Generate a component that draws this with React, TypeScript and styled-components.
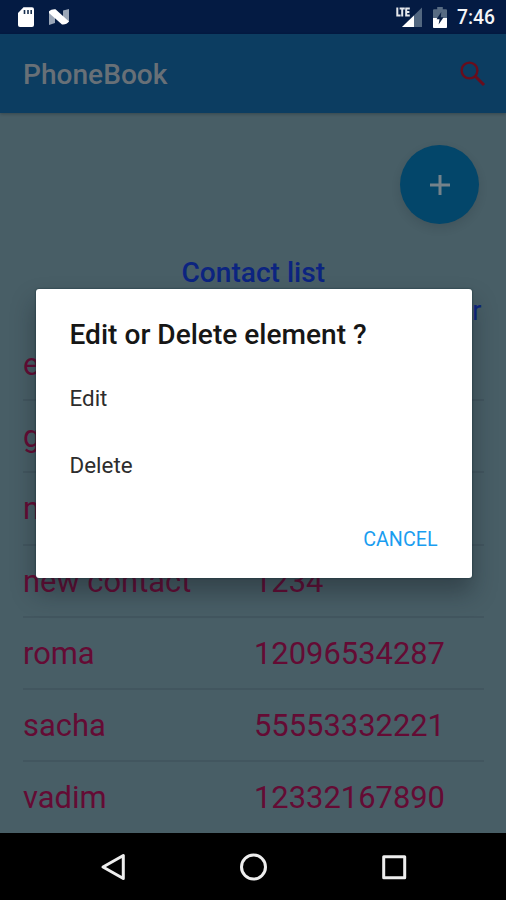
import React from "react";
import styled, { createGlobalStyle } from "styled-components";

const GlobalStyle = createGlobalStyle`
  * { box-sizing: border-box; }
  body { margin: 0; overflow: hidden; background: #485e66; font-family: Roboto, sans-serif; }
`;
const Screen = styled.div`
  position: relative;
  width: 506px;
  height: 900px;
  display: flex;
  flex-direction: column;
  background: #485e66;
  overflow: hidden;
`;
const StatusBar = styled.header`
  height: 34px;
  flex: none;
  display: flex;
  align-items: center;
  justify-content: space-between;
  padding: 0 11px 0 16px;
  background: #041b43;
`;
const StatusGroup = styled.div<{ $gap: number }>`
  display: flex;
  align-items: center;
  gap: ${(p) => p.$gap}px;
`;
const Clock = styled.time`
  color: #f4f6f8;
  font-size: 19.3px;
  font-weight: 500;
  line-height: 34px;
  padding-top: 2px;
`;
const AppBar = styled.div`
  height: 79px;
  flex: none;
  display: flex;
  align-items: center;
  justify-content: space-between;
  padding: 0 20px 0 23px;
  background: #0c3d61;
  box-shadow: 0 1px 3px rgba(0, 0, 0, 0.25);
`;
const AppTitle = styled.h1`
  margin: 2px 0 0;
  color: #687077;
  font-size: 28.1px;
  font-weight: 500;
`;
const IconButton = styled.button`
  display: flex;
  padding: 0;
  border: 0;
  background: none;
`;
const Content = styled.main`
  flex: 1;
  display: flex;
  flex-direction: column;
  min-height: 0;
  padding: 32px 22.5px 0 23px;
  overflow: hidden;
`;
const AddButton = styled.button`
  align-self: flex-end;
  display: flex;
  align-items: center;
  justify-content: center;
  width: 79px;
  height: 79px;
  flex: none;
  margin-right: 4.5px;
  padding: 0;
  border: 0;
  border-radius: 50%;
  background: #03466a;
  box-shadow: 0 4px 10px rgba(20, 25, 32, 0.14);
`;
const ListTitle = styled.h2`
  margin: 32px 0 0;
  height: 34px;
  line-height: 34px;
  text-align: center;
  color: #0c2480;
  font-size: 28.1px;
  font-weight: 500;
`;
const Columns = styled.div`
  display: flex;
  justify-content: flex-end;
  height: 39px;
  line-height: 42px;
  padding-right: 2px;
  color: #0c2480;
  font-size: 27px;
`;
const ContactRow = styled.div`
  display: grid;
  grid-template-columns: 231px 1fr;
  align-items: center;
  flex: none;
  height: 72.2px;
  padding-top: 2px;
  border-bottom: 2px solid #42565f;
  color: #640b34;
  font-size: 30.9px;
  line-height: 36px;
  white-space: nowrap;
  &:last-child { border-bottom-color: transparent; }
`;
const NavBar = styled.nav`
  height: 67px;
  flex: none;
  display: flex;
  align-items: center;
  justify-content: center;
  gap: 112px;
  background: #000;
`;
const Dialog = styled.section`
  position: absolute;
  left: 35.5px;
  top: 289px;
  width: 436px;
  height: 289px;
  display: flex;
  flex-direction: column;
  padding: 28px 34px 16px;
  border-radius: 3px;
  background: #fff;
  box-shadow: 0 0 2px rgba(5, 38, 42, 0.8), 0 14px 24px rgba(16, 22, 30, 0.38);
`;
const DialogTitle = styled.h2`
  margin: 0;
  color: #161616;
  font-size: 28.1px;
  line-height: 36px;
  font-weight: 500;
  white-space: nowrap;
`;
const Options = styled.div`
  display: flex;
  flex-direction: column;
  margin-top: 11px;
`;
const Option = styled.button`
  height: 67px;
  padding: 0;
  border: 0;
  background: none;
  color: #2d2d2d;
  font: 400 22.4px Roboto, sans-serif;
  text-align: left;
`;
const CancelButton = styled.button`
  align-self: flex-end;
  margin-top: 28.5px;
  padding: 0;
  border: 0;
  background: none;
  color: #1a9df0;
  font: 400 19.7px/26px Roboto, sans-serif;
`;

const contacts = [
  ["e", ""],
  ["g", ""],
  ["n", ""],
  ["new contact", "1234"],
  ["roma", "12096534287"],
  ["sacha", "55553332221"],
  ["vadim", "12332167890"],
];

const SdCardIcon = () => (
  <svg width="20" height="22" viewBox="0 0 20 22">
    <path d="M7.5 1.3H16q2 0 2 2V19q0 2-2 2H4q-2 0-2-2V7z" fill="#fff" />
    <path d="M8.5 4v4M12 4v4M15.2 4v4" stroke="#18304f" strokeWidth="1.6" />
  </svg>
);
const NougatIcon = () => (
  <svg width="22" height="18" viewBox="0 0 22 18">
    <path d="M1 4l6 3v8l-6 2zM15 2.5l6-1.5V14l-6-3z" fill="#9aa6b7" />
    <path d="M1 3.2Q3.5 .8 7.5 1.2L21 13.5Q18.5 17 14 16.5L1 5z" fill="#fff" />
  </svg>
);
const SignalIcon = () => (
  <svg width="28" height="22" viewBox="0 0 28 22">
    <path d="M27 1.5V21H7z" fill="#526780" />
    <path d="M19 9.5V21H7z" fill="#fff" />
    <path d="M2.3 1.6v8H5.6M4.6 2.5h5.2M7.2 2.5v8M14.8 2.5h-3.6v7.1h3.6M11.2 6h3.2" fill="none" stroke="#e5e8ed" strokeWidth="2" />
  </svg>
);
const BatteryIcon = () => (
  <svg width="14" height="21" viewBox="0 0 14 21">
    <path d="M4.2 0h5.6v2.3H13q1 0 1 1V20q0 1-1 1H1q-1 0-1-1V3.3q0-1 1-1h3.2z" fill="#586c83" />
    <path d="M0 11h14v9q0 1-1 1H1q-1 0-1-1z" fill="#fff" />
    <path d="M8.3 5L3.5 12.3h3L5.6 17.5l5-7.3H7.8z" fill="#0a2045" />
  </svg>
);

export default function App() {
  return (
    <>
      <GlobalStyle />
      <Screen>
        <StatusBar>
          <StatusGroup $gap={12}><SdCardIcon /><NougatIcon /></StatusGroup>
          <StatusGroup $gap={10}><SignalIcon /><BatteryIcon /><Clock>7:46</Clock></StatusGroup>
        </StatusBar>
        <AppBar>
          <AppTitle>PhoneBook</AppTitle>
          <IconButton aria-label="Search">
            <svg width="26" height="26" viewBox="0 0 26 26" fill="none" stroke="#690d1c" strokeWidth="2.4">
              <circle cx="9.5" cy="9.5" r="7.9" /><path d="M15 15l9 9" strokeWidth="3" />
            </svg>
          </IconButton>
        </AppBar>
        <Content>
          <AddButton aria-label="Add contact">
            <svg width="20" height="20" viewBox="0 0 20 20" fill="none" stroke="#75828a" strokeWidth="3">
              <path d="M10 0v20M0 10h20" />
            </svg>
          </AddButton>
          <ListTitle>Contact list</ListTitle>
          <Columns><span>Number</span></Columns>
          {contacts.map(([name, number]) => (
            <ContactRow key={name}><span>{name}</span><span>{number}</span></ContactRow>
          ))}
        </Content>
        <NavBar>
          <IconButton aria-label="Back">
            <svg width="28" height="30" viewBox="0 0 28 30" fill="none" stroke="#eee" strokeWidth="3" strokeLinejoin="round">
              <path d="M24.3 3.5v23L4 15z" />
            </svg>
          </IconButton>
          <IconButton aria-label="Home">
            <svg width="30" height="30" viewBox="0 0 30 30" fill="none" stroke="#eee" strokeWidth="3"><circle cx="14.5" cy="15" r="12" /></svg>
          </IconButton>
          <IconButton aria-label="Recent apps">
            <svg width="26" height="26" viewBox="0 0 26 26" fill="none" stroke="#eee" strokeWidth="3" strokeLinejoin="round"><path d="M2.7 2.7h21v21h-21z" /></svg>
          </IconButton>
        </NavBar>
        <Dialog role="dialog">
          <DialogTitle>Edit or Delete element ?</DialogTitle>
          <Options><Option>Edit</Option><Option>Delete</Option></Options>
          <CancelButton>CANCEL</CancelButton>
        </Dialog>
      </Screen>
    </>
  );
}
